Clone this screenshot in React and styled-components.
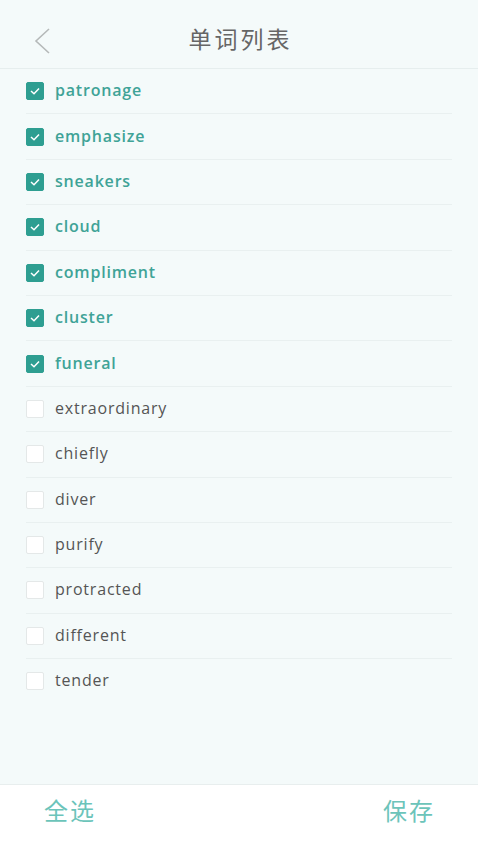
import React, { useState } from "react";
import styled, { createGlobalStyle } from "styled-components";

const Global = createGlobalStyle`
  html, body { margin: 0; padding: 0; background: #f4fafa; }
  body { font-family: "Open Sans", "Noto Sans CJK SC", sans-serif; }
  * { box-sizing: border-box; }
`;

const Page = styled.div`
  width: 478px;
  height: 850px;
  display: flex;
  flex-direction: column;
  background: #f4fafa;
`;

const Header = styled.div`
  height: 69px;
  flex: none;
  display: flex;
  align-items: center;
  justify-content: center;
  position: relative;
  border-bottom: 1px solid #e6eeee;
`;

const Back = styled.button`
  position: absolute;
  left: 30px;
  top: 27px;
  width: 24px;
  height: 28px;
  border: none;
  background: none;
  padding: 0;
`;

const Title = styled.h1`
  margin: 0;
  font-family: "Noto Sans CJK SC", sans-serif;
  font-weight: 400;
  font-size: 23px;
  color: #666;
  letter-spacing: 3px;
  margin-left: 3px;
  margin-top: 8px;
`;

const List = styled.div`
  flex: 1;
  padding: 0 26px;
`;

const Row = styled.label`
  height: 45.4px;
  display: flex;
  align-items: center;
  gap: 11px;
  border-bottom: 1px solid #e9f0f0;
  cursor: pointer;
  &:last-child { border-bottom-color: transparent; }
`;

const Box = styled.span`
  width: 18px;
  height: 18px;
  border-radius: 2px;
  flex: none;
  display: flex;
  align-items: center;
  justify-content: center;
  background: ${(p) => (p.$on ? "#2e9e91" : "#ffffff")};
  border: 1px solid ${(p) => (p.$on ? "#2e9e91" : "#e4e8e8")};
`;

const Word = styled.span`
  font-family: "Open Sans", sans-serif;
  font-size: 16px;
  font-weight: ${(p) => (p.$on ? 600 : 500)};
  letter-spacing: 0.8px;
  color: ${(p) => (p.$on ? "#3fa397" : "#555")};
  margin-top: -2px;
`;

const Footer = styled.div`
  height: 66px;
  flex: none;
  background: #ffffff;
  border-top: 1px solid #e8eeee;
  display: flex;
  align-items: center;
  justify-content: space-between;
  padding: 0 43px 0 44px;
`;

const FootBtn = styled.button`
  border: none;
  background: none;
  padding: 0;
  font-family: "Noto Sans CJK SC", sans-serif;
  font-size: 24px;
  color: #6cc4ba;
  letter-spacing: 2px;
  margin-top: -16px;
`;

const initial = [
  ["patronage", true],
  ["emphasize", true],
  ["sneakers", true],
  ["cloud", true],
  ["compliment", true],
  ["cluster", true],
  ["funeral", true],
  ["extraordinary", false],
  ["chiefly", false],
  ["diver", false],
  ["purify", false],
  ["protracted", false],
  ["different", false],
  ["tender", false],
];

export default function App() {
  const [items, setItems] = useState(initial);
  const toggle = (i) =>
    setItems((s) => s.map((it, j) => (j === i ? [it[0], !it[1]] : it)));
  return (
    <Page>
      <Global />
      <Header>
        <Back aria-label="back">
          <svg width="24" height="28" viewBox="0 0 24 28">
            <path d="M19 2 L6 14 L19 26" fill="none" stroke="#b5b9b9" strokeWidth="1.6" />
          </svg>
        </Back>
        <Title>单词列表</Title>
      </Header>
      <List>
        {items.map(([w, on], i) => (
          <Row key={w} onClick={() => toggle(i)}>
            <Box $on={on}>
              {on && (
                <svg width="12" height="10" viewBox="0 0 12 10">
                  <path d="M2 5 L5 7.8 L10 2.5" fill="none" stroke="#fff" strokeWidth="1.5" />
                </svg>
              )}
            </Box>
            <Word $on={on}>{w}</Word>
          </Row>
        ))}
      </List>
      <Footer>
        <FootBtn onClick={() => setItems((s) => s.map(([w]) => [w, true]))}>全选</FootBtn>
        <FootBtn>保存</FootBtn>
      </Footer>
    </Page>
  );
}
